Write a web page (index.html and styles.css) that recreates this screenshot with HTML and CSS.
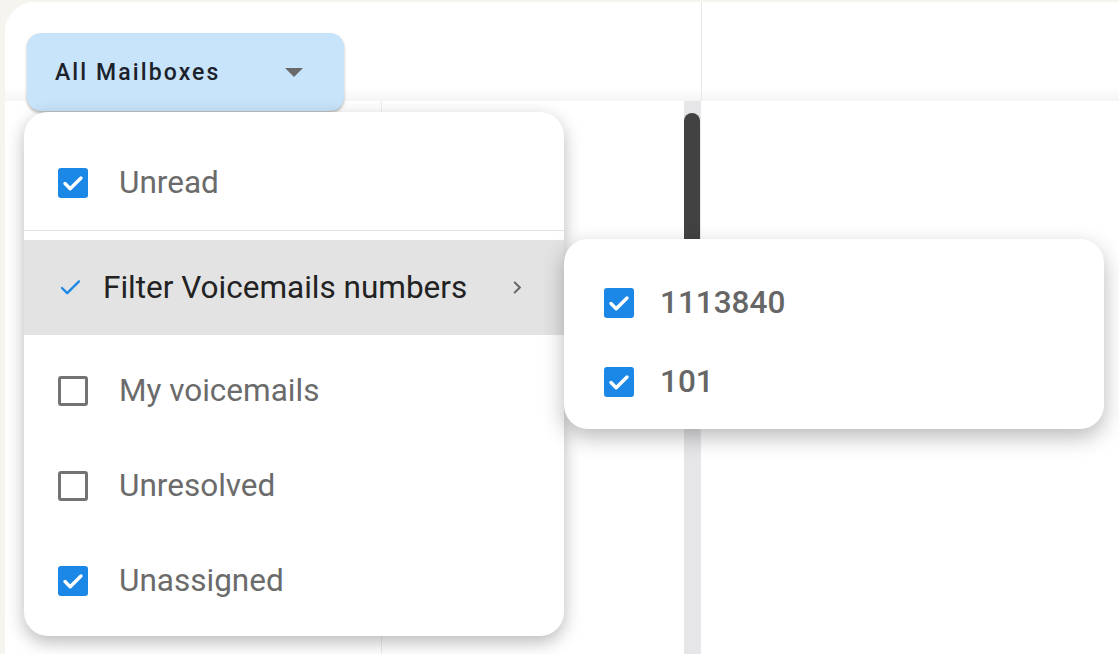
FILE: index.html
```html
<!DOCTYPE html>
<html lang="en">
<head>
<meta charset="utf-8">
<title>Mailbox filter</title>
<link rel="stylesheet" href="styles.css">
</head>
<body>
<div class="app">
  <div class="header">
    <div class="header-main">
      <button class="mailbox-btn" type="button">
        <span class="mailbox-label">All Mailboxes</span>
        <span class="caret"></span>
      </button>
    </div>
    <div class="header-side"></div>
  </div>
  <div class="content">
    <div class="list"></div>
    <div class="middle"></div>
    <div class="scroll"><div class="thumb"></div></div>
    <div class="detail"></div>
  </div>

  <div class="menu">
    <div class="row row-first">
      <span class="cb on"><svg viewBox="0 0 30 30"><path d="M7 15.5l5.2 5.2L23 10" /></svg></span>
      <span class="label">Unread</span>
    </div>
    <div class="divider"></div>
    <div class="row row-active">
      <svg class="tick" viewBox="0 0 22 18"><path d="M2 9.5l5.5 5.5L20 2.5" /></svg>
      <span class="label label-dark">Filter Voicemails numbers</span>
      <svg class="chevron" viewBox="0 0 10 16"><path d="M2 2l6 6-6 6" /></svg>
    </div>
    <div class="row row-gap">
      <span class="cb"></span>
      <span class="label">My voicemails</span>
    </div>
    <div class="row">
      <span class="cb"></span>
      <span class="label">Unresolved</span>
    </div>
    <div class="row">
      <span class="cb on"><svg viewBox="0 0 30 30"><path d="M7 15.5l5.2 5.2L23 10" /></svg></span>
      <span class="label">Unassigned</span>
    </div>
  </div>

  <div class="submenu">
    <div class="sub-row">
      <span class="cb on"><svg viewBox="0 0 30 30"><path d="M7 15.5l5.2 5.2L23 10" /></svg></span>
      <span class="num">1113840</span>
    </div>
    <div class="sub-row">
      <span class="cb on"><svg viewBox="0 0 30 30"><path d="M7 15.5l5.2 5.2L23 10" /></svg></span>
      <span class="num">101</span>
    </div>
  </div>
</div>
</body>
</html>
```

FILE: styles.css
```css
* { box-sizing: border-box; }

html, body {
  margin: 0;
  padding: 0;
  width: 1119px;
  height: 654px;
  overflow: hidden;
  background: #f6f4ef;
  font-family: Roboto, "Liberation Sans", Arial, sans-serif;
}

.app {
  position: relative;
  margin: 2px 0 0 5px;
  height: 652px;
  background: #ffffff;
  border-top-left-radius: 30px;
  overflow: hidden;
  display: flex;
  flex-direction: column;
}

.header {
  height: 99px;
  display: flex;
  flex: none;
}

.header-main {
  width: 697px;
  border-right: 1px solid #e8e8e8;
  padding: 31px 0 0 22px;
  background: linear-gradient(#ffffff 85%, #f5f5f5 100%);
}

.header-side {
  flex: 1;
  background: linear-gradient(#ffffff 85%, #f5f5f5 100%);
}

.mailbox-btn {
  width: 317px;
  height: 78px;
  border: none;
  border-radius: 14px;
  background: #c8e4fa;
  box-shadow: 0 2px 3px rgba(0, 0, 0, 0.28);
  display: flex;
  align-items: center;
  padding: 0 41px 0 28px;
  font-family: inherit;
  cursor: pointer;
}

.mailbox-label {
  flex: 1;
  text-align: left;
  font-size: 23px;
  font-weight: 500;
  letter-spacing: 2.1px;
  color: #1b222c;
}

.caret {
  width: 0;
  height: 0;
  border-left: 9px solid transparent;
  border-right: 9px solid transparent;
  border-top: 9px solid #6a6a6a;
}

.content {
  flex: 1;
  display: flex;
}

.list {
  width: 377px;
  border-right: 1px solid #ededed;
}

.middle {
  width: 302px;
}

.scroll {
  width: 16px;
  background: #e6e6e8;
  padding-top: 12px;
}

.thumb {
  height: 200px;
  background: #424242;
  border-radius: 8px 8px 0 0;
}

.detail {
  flex: 1;
  border-left: 1px solid #e8e8ee;
}

/* Dropdown menu */
.menu {
  position: absolute;
  left: 19px;
  top: 110px;
  width: 540px;
  height: 524px;
  background: #ffffff;
  border-radius: 24px;
  box-shadow: 0 6px 18px rgba(0, 0, 0, 0.28);
  padding: 8px 0;
}

.row {
  height: 95px;
  display: flex;
  align-items: center;
  padding-left: 34px;
}

.row-first {
  margin-top: 15px;
}

.divider {
  height: 1px;
  background: #e2e2e2;
  margin-bottom: 9px;
}

.row-active {
  background: #e3e3e3;
  padding-left: 36px;
  padding-right: 42px;
}

.row-gap {
  margin-top: 8px;
}

.cb {
  width: 30px;
  height: 30px;
  flex: none;
  border: 3px solid #737373;
  border-radius: 3px;
  display: flex;
  align-items: center;
  justify-content: center;
}

.cb.on {
  background: #1b87e6;
  border: none;
}

.cb svg {
  width: 30px;
  height: 30px;
}

.cb svg path {
  fill: none;
  stroke: #ffffff;
  stroke-width: 3.4;
  stroke-linecap: round;
  stroke-linejoin: round;
}

.label {
  margin-left: 31px;
  font-size: 31.5px;
  color: #6b6b6b;
  white-space: nowrap;
}

.label-dark {
  margin-left: 22px;
  flex: 1;
  color: #222222;
}

.tick {
  width: 21px;
  height: 17px;
  flex: none;
}

.tick path {
  fill: none;
  stroke: #1b87e6;
  stroke-width: 2.4;
  stroke-linecap: round;
  stroke-linejoin: round;
}

.chevron {
  width: 10px;
  height: 15px;
  flex: none;
}

.chevron path {
  fill: none;
  stroke: #666666;
  stroke-width: 2.2;
}

/* Submenu */
.submenu {
  position: absolute;
  left: 559px;
  top: 237px;
  width: 540px;
  height: 190px;
  background: #ffffff;
  border-radius: 24px;
  box-shadow: 0 8px 22px rgba(0, 0, 0, 0.28);
  padding-top: 24px;
}

.sub-row {
  height: 79px;
  display: flex;
  align-items: center;
  padding-left: 40px;
}

.num {
  margin-left: 26px;
  font-size: 31.5px;
  font-weight: 500;
  color: #666666;
}
```
